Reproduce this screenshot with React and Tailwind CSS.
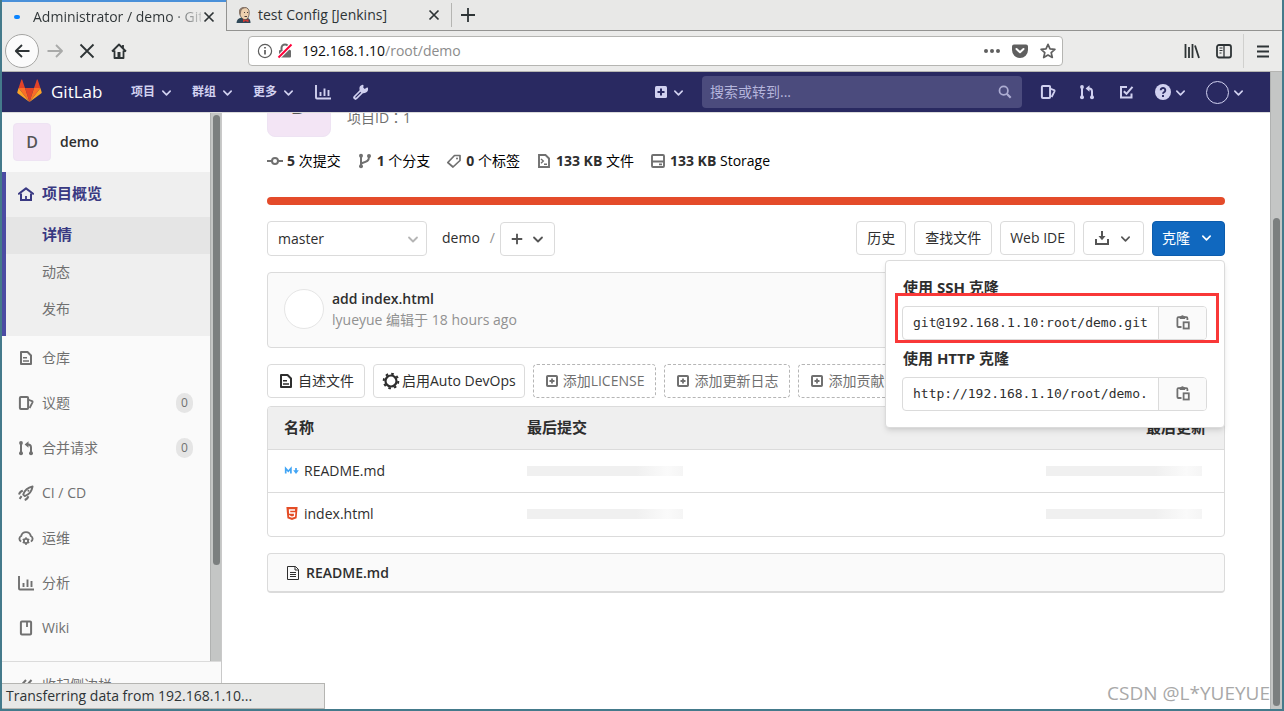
import { useState } from 'react'

const Icon = ({ className = 'size-4', children, viewBox = '0 0 16 16' }) => (
  <svg className={`shrink-0 ${className}`} viewBox={viewBox} fill="none" stroke="currentColor" strokeWidth="2" aria-hidden="true">
    {children}
  </svg>
)

const Chevron = ({ className = 'size-3' }) => (
  <Icon className={className} viewBox="0 0 12 12">
    <path d="M2 4.5l4 4 4-4" strokeWidth="1.8" strokeLinecap="round" strokeLinejoin="round" />
  </Icon>
)

const CloseIcon = () => (
  <Icon className="size-4">
    <path d="M3.5 3.5l9 9M12.5 3.5l-9 9" strokeWidth="1.7" />
  </Icon>
)

const ChartIcon = ({ className }) => (
  <Icon className={className}>
    <path d="M1 1v12.5a1 1 0 001 1h14" strokeWidth="1.9" />
    <path d="M5.5 8v4M9.5 4.5V12M13.5 6v6" strokeWidth="1.9" />
  </Icon>
)

const IssuesIcon = ({ className }) => (
  <Icon className={className}>
    <rect x="1.9" y="2" width="8.2" height="12" rx="1" />
    <path d="M10 4.5l4 1.6c.5.2.7.7.5 1.2L11.6 13" strokeWidth="1.8" />
  </Icon>
)

const MergeIcon = ({ className }) => (
  <Icon className={className}>
    <path d="M3 4v9M13 12V7.5a3 3 0 00-3-3H9" />
    <circle cx="3" cy="3" r="1.9" fill="currentColor" stroke="none" />
    <circle cx="3" cy="13.2" r="2" fill="currentColor" stroke="none" />
    <circle cx="13" cy="13.2" r="2" fill="currentColor" stroke="none" />
    <path d="M10.5 1.2v6.6L6.6 4.5z" fill="currentColor" stroke="none" />
  </Icon>
)

const HomeIcon = ({ className }) => (
  <Icon className={className}>
    <path d="M.9 7.8L8 2.4l7.1 5.4" strokeLinecap="round" strokeLinejoin="round" />
    <path d="M3 7.5V14h10V7.5" />
    <path d="M8 10v4" strokeWidth="1.8" />
  </Icon>
)

const DocIcon = ({ className }) => (
  <Icon className={className}>
    <path d="M3 2h6.5L13 5.5V14H3z" strokeLinejoin="round" />
    <path d="M5 7.8h4M5 10.9h6" strokeWidth="1.5" />
  </Icon>
)

const RocketIcon = ({ className }) => (
  <Icon className={className}>
    <path d="M5.2 9.5C6.5 5.5 9.5 2.6 14.6 1.5c-.8 5-3.8 8.2-7.8 9.6z" strokeWidth="1.8" strokeLinejoin="round" />
    <path d="M4.8 5.8C3 6.2 1.6 7.5 1 9.6M10.3 11.3c-.4 1.8-1.6 3-3.6 3.7M3.6 11.2l-2 2.6" strokeWidth="2" />
    <circle cx="10.4" cy="5.8" r="1" fill="currentColor" stroke="none" />
  </Icon>
)

const CloudGearIcon = ({ className }) => (
  <Icon className={className}>
    <path d="M3.2 11.5A3 3 0 013.2 6 4.9 4.9 0 0112.8 6a3 3 0 010 5.5" strokeWidth="1.9" />
    <circle cx="8" cy="11" r="2.1" strokeWidth="1.8" />
    <path d="M8 7.2v1.6M8 13.2V15M4.7 9.1l1.4.8M9.9 12.1l1.4.8M4.7 12.9l1.4-.8M9.9 9.9l1.4-.8" strokeWidth="1.5" />
  </Icon>
)

const BookIcon = ({ className }) => (
  <Icon className={className}>
    <rect x="2.9" y="1.5" width="10.2" height="13" rx="1" />
    <path d="M9 2v5" strokeWidth="1.8" />
  </Icon>
)

const PlusSquare = ({ className }) => (
  <Icon className={className} viewBox="0 0 14 14">
    <rect x="2" y="2" width="10" height="10" rx=".8" />
    <path d="M7 4.5v5M4.5 7h5" strokeWidth="1.8" />
  </Icon>
)

const CopyIcon = () => (
  <Icon className="size-4">
    <path d="M6.5 13H3.4a1 1 0 01-1-1V4.2a1 1 0 011-1h8a1 1 0 011 1V6" strokeWidth="1.8" />
    <path d="M4.7 2.3h1.3a1.5 1.5 0 012.9 0h1.3V5H4.7z" fill="currentColor" stroke="none" />
    <rect x="8.6" y="8.3" width="5.2" height="6.2" strokeWidth="1.8" />
  </Icon>
)

const GitLabLogo = () => (
  <svg className="h-6 w-[25px] shrink-0" viewBox="0 0 25 24" aria-hidden="true">
    <path fill="#e24329" d="M12.5 23l4.5-14h-9z" />
    <path fill="#fc6d26" d="M12.5 23L8 9H1.6zM12.5 23L17 9h6.4z" />
    <path fill="#fca326" d="M1.6 9L.3 13.2c-.1.4 0 .8.3 1L12.5 23zM23.4 9l1.3 4.2c.1.4 0 .8-.3 1L12.5 23z" />
    <path fill="#e24329" d="M1.6 9H8L5.2.8c-.1-.4-.7-.4-.9 0zM23.4 9H17L19.8.8c.1-.4.7-.4.9 0z" />
  </svg>
)

const JenkinsIcon = () => (
  <svg className="size-4 shrink-0" viewBox="0 0 16 16" aria-hidden="true">
    <path d="M.5 16c0-3 2-5 5-5.5l6 .5c2 .5 3 2 3 5z" fill="#2f4858" />
    <path d="M3.5 5C3.5 2 5.5.4 8.5.4s4.900 2 4.700 5.600c-.2 4-1.700 6.700-4.200 6.700S3.5 9 3.5 5z" fill="#edd0ae" stroke="#4b3f3a" strokeWidth=".7" />
    <path d="M3.2 6.500C2.500 2.500 4.500.3 8 .3c1.300 0 2.200.2 3 .7-3.200 0-5 .8-5.700 2.800L4.600 8z" fill="#8a7668" />
    <path d="M8 5.500h1M11 5.500h1M8.500 9.500h2.500" stroke="#3b3030" strokeWidth=".9" />
    <path d="M7 12l2.500 1.200L12.500 12v3.200L9.500 14 7 15.200z" fill="#d33833" />
  </svg>
)

const navLinks = ['项目', '群组', '更多']

const menu = [
  { label: '仓库', icon: DocIcon },
  { label: '议题', icon: IssuesIcon, count: 0 },
  { label: '合并请求', icon: MergeIcon, count: 0 },
  { label: 'CI / CD', icon: RocketIcon },
  { label: '运维', icon: CloudGearIcon },
  { label: '分析', icon: ChartIcon },
  { label: 'Wiki', icon: BookIcon },
]

const MarkdownFile = () => (
  <Icon className="size-4">
    <path d="M1.7 10.5v-5l2.6 2.8 2.6-2.8v5" stroke="#42a5f5" strokeWidth="1.7" />
    <path d="M12 5v4" stroke="#42a5f5" strokeWidth="1.7" />
    <path d="M9.2 7.3h5.6L12 11z" fill="#42a5f5" stroke="none" />
  </Icon>
)

const HtmlFile = () => (
  <Icon className="size-4">
    <path d="M2.4 1h11.2l-1 11.2L8 14l-4.6-1.8z" fill="#e44d26" stroke="none" />
    <path d="M11 4H5.5l.2 3h5l-.3 3.3L8 11l-2.3-.7-.1-1" stroke="#fff" strokeWidth="1.3" />
  </Icon>
)

const files = [
  { name: 'README.md', icon: MarkdownFile },
  { name: 'index.html', icon: HtmlFile },
]

function BrowserChrome() {
  return (
    <div className="shrink-0 bg-[#ebebea] text-[#2e3436] border-b border-[#b5b5b2]">
      <div className="flex h-[31px] text-sm">
        <div className="flex w-56 items-center border-t-2 border-[#4a90d9] pl-3 pr-[9px]">
          <span className="h-1 w-1.5 shrink-0 rounded-full bg-[#0a84ff]" />
          <span className="ml-[13px] flex-1 overflow-hidden whitespace-nowrap bg-linear-to-r from-[#2e3436] from-80% to-[#2e3436]/20 bg-clip-text text-transparent">
            Administrator / demo · GitLab
          </span>
          <button type="button" aria-label="Close tab"><CloseIcon /></button>
        </div>
        <div className="flex flex-1 items-center border-b border-l border-[#939391] bg-[#e8e8e7]">
          <div className="flex h-6 w-[225px] items-center border-r border-[#b5b5b2] px-[9px]">
            <JenkinsIcon />
            <span className="ml-1.5 flex-1 whitespace-nowrap">test Config [Jenkins]</span>
            <button type="button" aria-label="Close tab"><CloseIcon /></button>
          </div>
          <button type="button" aria-label="New tab" className="ml-2">
            <Icon><path d="M8 1v14M1 8h14" strokeWidth="1.8" /></Icon>
          </button>
        </div>
      </div>
      <div className="flex h-10 items-center pl-[3px] pr-3">
        <button type="button" aria-label="Back" className="flex size-[34px] items-center justify-center rounded-full border border-[#a5a5a3] bg-[#fbfbfb]">
          <Icon><path d="M15.5 8H1.5M8 2L1.8 8 8 14" strokeWidth="1.8" strokeLinejoin="round" /></Icon>
        </button>
        <button type="button" aria-label="Forward" className="ml-2 text-[#a9aaa9]">
          <Icon><path d="M.5 8h14M9 2l6 6-6 6" strokeWidth="1.8" strokeLinejoin="round" /></Icon>
        </button>
        <button type="button" aria-label="Stop" className="ml-4"><Icon><path d="M1.5 1.5l13 13M14.5 1.5l-13 13" strokeWidth="1.8" /></Icon></button>
        <button type="button" aria-label="Home" className="ml-4">
          <Icon>
            <path d="M1 8.5l7-7 7 7M3.5 7.5V15h9V7.5M12 2v3" strokeWidth="1.8" strokeLinejoin="round" />
            <path d="M8 9v5" strokeWidth="3" />
          </Icon>
        </button>
        <div className="ml-[121px] mr-[121px] flex h-[30px] flex-1 items-center rounded border border-[#b5b5b2] bg-white pl-2 pr-1.5 text-sm">
          <Icon className="size-4 text-[#5c5c5c]">
            <circle cx="8" cy="8" r="6.6" strokeWidth="1.2" />
            <path d="M8 7v4.5M8 4v1.5" strokeWidth="1.7" />
          </Icon>
          <Icon className="ml-1 size-4 text-[#6b6b6b]">
            <rect x="2" y="7" width="12" height="7.5" rx="1" fill="currentColor" stroke="none" />
            <path d="M4.5 8V5a3.5 3.5 0 017 0v3" />
            <path d="M1.5 14.5l13-13" stroke="#fff" strokeWidth="4" />
            <path d="M1.5 14.5l13-13" stroke="#ff0039" />
          </Icon>
          <span className="ml-[9px] flex-1 text-[#0c0c0d]">192.168.1.10<span className="text-[#8c8c8c]">/root/demo</span></span>
          <div className="flex items-center gap-3 text-[#5f5f5f]">
            <Icon><g fill="currentColor" stroke="none"><circle cx="2" cy="8" r="2" /><circle cx="8" cy="8" r="2" /><circle cx="14" cy="8" r="2" /></g></Icon>
            <Icon>
              <path d="M2 1.5h12A2 2 0 0116 3.500V7a8 8 0 01-16 0V3.500a2 2 0 012-2z" fill="currentColor" stroke="none" />
              <path d="M4.5 6L8 9.3 11.5 6" stroke="#fff" strokeLinecap="round" strokeLinejoin="round" />
            </Icon>
            <Icon><path d="M8 1.3l2 4.5 4.9.5-3.7 3.3 1.1 4.9L8 12l-4.300 2.500 1.100-4.900L1.100 6.300 6 5.800z" strokeWidth="1.7" strokeLinejoin="round" /></Icon>
          </div>
        </div>
        <Icon className="size-4"><path d="M1.5 1v14M5 4v11M8.5 1v14M11 2.5L15 15" strokeWidth="1.8" /></Icon>
        <Icon className="ml-4 size-4">
          <rect x="1" y="2" width="14" height="12.5" rx="2" strokeWidth="1.8" />
          <path d="M8 2v12" strokeWidth="1.3" />
          <path d="M3.5 5h3M3.5 7.5h3M3.5 10h2" strokeWidth="1" />
        </Icon>
        <div className="ml-[11px] h-[34px] w-px bg-[#d0d0ce]" />
        <button type="button" aria-label="Menu" className="ml-3">
          <Icon className="size-3.5" viewBox="0 0 14 14"><path d="M1 2.5h12M1 7.5h12M1 12.5h12" strokeWidth="1.8" /></Icon>
        </button>
      </div>
    </div>
  )
}

function NavBar() {
  return (
    <header className="flex h-10 shrink-0 items-center bg-[#292961] pl-[15px] pr-[26px] text-[#d1d1f0]">
      <a href="#home" className="flex w-[87px] items-center gap-[9px] pb-0.5">
        <GitLabLogo />
        <span className="text-[17px] font-medium leading-none text-white">GitLab</span>
      </a>
      <nav className="ml-[27px] flex items-center gap-5">
        {navLinks.map((label) => (
          <button key={label} type="button" className="flex items-center gap-1.5 text-xs font-bold">
            {label}
            <Chevron className="size-[11px]" />
          </button>
        ))}
        <a href="#analytics" aria-label="分析"><ChartIcon className="ml-px size-4" /></a>
        <a href="#admin" aria-label="管理">
          <Icon className="ml-0.5 size-4">
            <path d="M2.5 13.5L8.5 7.5" strokeWidth="4.500" strokeLinecap="round" />
            <path d="M2.8 13.2L8 8" stroke="#292961" strokeWidth="1.2" strokeLinecap="round" />
            <path d="M14.3 4.2A3.6 3.6 0 119.8 1.4l-.2 2.6 2 1.8z" fill="currentColor" strokeWidth="1.4" strokeLinejoin="round" />
          </Icon>
        </a>
      </nav>
      <div className="flex-1" />
      <button type="button" aria-label="新建" className="flex items-center gap-1.5">
        <svg className="size-3" viewBox="0 0 12 12" aria-hidden="true">
          <rect width="12" height="12" rx="1.5" fill="#d1d1f0" />
          <path d="M6 2.5v7M2.5 6h7" stroke="#292961" strokeWidth="2" />
        </svg>
        <Chevron className="size-[11px]" />
      </button>
      <div className="ml-[18px] flex h-8 w-80 items-center rounded bg-[#4b4b7d] px-2">
        <input aria-label="搜索" placeholder="搜索或转到..." className="min-w-0 flex-1 bg-transparent text-sm outline-none placeholder:text-[#b5b5dc]" />
        <Icon className="mr-0.5 size-3.5 text-[#adadd2]"><circle cx="6.5" cy="6.5" r="4.8" /><path d="M10 10l4.5 4.5" strokeWidth="2.5" /></Icon>
      </div>
      <div className="ml-[18px] flex items-center">
        <IssuesIcon className="size-4" />
        <MergeIcon className="ml-[23px] size-4" />
        <Icon className="ml-[23px] size-4">
          <path d="M9 3H3v10.500h10.500V9.500" />
          <path d="M5.8 7.2l2.7 2.6 6-7" />
        </Icon>
        <button type="button" aria-label="帮助" className="ml-[21px] flex items-center gap-1">
          <svg className="size-4" viewBox="0 0 16 16" aria-hidden="true">
            <circle cx="8" cy="8" r="8" fill="#d1d1f0" />
            <path d="M5.7 6.2a2.3 2.2 0 114 1.5C8.9 8.3 8 8.6 8 9.8M8 11v2" fill="none" stroke="#292961" strokeWidth="1.9" />
          </svg>
          <Chevron className="size-[11px]" />
        </button>
        <button type="button" aria-label="用户" className="ml-5 flex items-center gap-1">
          <span className="size-[23px] rounded-full border border-[#d1d1f0]" />
          <Chevron className="size-[11px]" />
        </button>
      </div>
    </header>
  )
}

function Sidebar() {
  return (
    <aside className="flex w-[220px] shrink-0 flex-col border-r border-[#c9c9c9] bg-[#fafafa] text-sm text-[#707070]">
      <div className="flex min-h-0 flex-1">
        <div className="min-w-0 flex-1 overflow-hidden">
          <a href="#demo" className="flex h-[59px] items-center gap-[9px] pb-0.5 pl-[11px] font-semibold text-[#2e2e2e]">
            <span className="flex size-[38px] items-center justify-center rounded border border-[#eee3f3] bg-[#f3e5f5] text-base text-[#555]">D</span>
            demo
          </a>
          <div className="border-l-4 border-[#4b4ba3] bg-[#efefef] pb-2">
            <a href="#overview" className="flex h-[45px] items-center gap-2 pb-0.5 pl-3 text-[15px] font-bold text-[#393982]">
              <HomeIcon className="size-4" />
              项目概览
            </a>
            <a href="#details" className="flex h-[37px] items-center bg-[#e5e5e5] pb-0.5 pl-9 text-[15px] font-bold text-[#393982]">详情</a>
            <a href="#activity" className="flex h-[37px] items-center pb-0.5 pl-9">动态</a>
            <a href="#releases" className="flex h-[37px] items-center pb-0.5 pl-9">发布</a>
          </div>
          {menu.map(({ label, icon: ItemIcon, count }) => (
            <a key={label} href="#menu" className="flex h-[45px] items-center gap-2 pb-0.5 pl-4 pr-[17px]">
              <ItemIcon className="size-4" />
              <span className="flex-1">{label}</span>
              {count !== undefined && (
                <span className="flex h-5 w-[17px] items-center justify-center rounded-full bg-[#e5e5e5] text-xs">{count}</span>
              )}
            </a>
          ))}
        </div>
        <div className="w-[11px] border-l border-[#b0b2b1] bg-[#c4c6c5] px-0.5 pt-0.5">
          <div className="h-[450px] w-[7px] rounded-full bg-[#7b7f7f]" />
        </div>
      </div>
      <button type="button" className="flex h-12 shrink-0 items-center gap-2 border-t border-[#dbdbdb] pb-0.5 pl-4">
        <Icon><path d="M8 3L3.5 8 8 13M13.5 3L9 8l4.5 5" /></Icon>
        收起侧边栏
      </button>
    </aside>
  )
}

const buttonBase = 'flex h-[34px] items-center rounded border border-[#dbdbdb] bg-white whitespace-nowrap'

function CloneField({ id, label, url }) {
  return (
    <div>
      <label htmlFor={id} className="block h-[27px] pl-px text-[15px] font-bold leading-4">{label}</label>
      <div className="flex h-[34px] overflow-hidden rounded border border-[#dbdbdb]">
        <input id={id} readOnly defaultValue={url} className="min-w-0 flex-1 px-2.5 font-['DejaVu_Sans_Mono',monospace] text-[13px] outline-none" />
        <button type="button" aria-label="复制" className="flex w-12 items-center justify-center border-l border-[#dbdbdb] bg-[#fafafa] pb-0.5 text-[#707070]">
          <CopyIcon />
        </button>
      </div>
    </div>
  )
}

function CloneDropdown() {
  const [open, setOpen] = useState(true)

  return (
    <div className="relative">
      <button
        type="button"
        onClick={() => setOpen(!open)}
        className="flex h-[35px] w-[73px] items-center justify-between rounded border border-[#0b5cad] bg-[#1068bf] pb-0.5 pl-[9px] pr-3 text-white"
      >
        克隆
        <Chevron className="size-[11px]" />
      </button>
      {open && (
        <div className="absolute right-0 top-[39px] z-10 flex w-[340px] flex-col gap-2.5 rounded border border-[#dbdbdb] bg-white pb-4 pl-4 pr-[17px] pt-[18px] shadow-md">
          <CloneField id="clone-ssh" label="使用 SSH 克隆" url="git@192.168.1.10:root/demo.git" />
          <CloneField id="clone-http" label="使用 HTTP 克隆" url="http://192.168.1.10/root/demo.git" />
          <div className="absolute left-[9px] right-[5px] top-8 h-[50px] border-3 border-[#f93838] pointer-events-none" />
        </div>
      )}
    </div>
  )
}

function AddFile({ children }) {
  return (
    <button type="button" className="flex h-[34px] items-center gap-1 whitespace-nowrap rounded border border-dashed border-[#b5b5b5] px-[11px] text-[#707070]">
      <PlusSquare className="size-3.5" />
      {children}
    </button>
  )
}

const Skeleton = () => (
  <div className="h-2.5 w-[156px] bg-linear-to-r from-[#f0f0f0] from-70% via-[#fafafa] via-90% to-[#f5f5f5]" />
)

function ProjectPage() {
  return (
    <main className="min-w-0 flex-1 overflow-hidden bg-white text-sm text-[#2e2e2e]">
      <div className="mx-auto -mt-10 max-w-[990px] px-4">
        <div className="flex gap-4">
          <div className="flex size-16 items-center justify-center rounded-lg border border-[#eee3f3] bg-[#f3e5f5] text-2xl text-[#555]">D</div>
          <div className="pt-[34px] text-[#707070]">项目ID<span className="font-['Noto_Sans_CJK_TC',sans-serif]">：</span>1</div>
        </div>

        <div className="mt-3.5 flex h-5 items-center gap-4 text-black">
          <span className="flex items-center gap-1">
            <Icon className="size-4 text-[#707070]"><circle cx="8" cy="8" r="3" /><path d="M0 8h5M11 8h5" /></Icon>
            <span><b className="font-bold text-[#2e2e2e]">5</b> 次提交</span>
          </span>
          <span className="flex items-center gap-1">
            <Icon className="size-4 text-[#707070]">
              <path d="M4 3v10M12 4c0 4-2 4.5-8 6.5" />
              <g fill="currentColor" stroke="none"><circle cx="4" cy="2.8" r="2" /><circle cx="4" cy="13.2" r="2" /><circle cx="12" cy="3" r="2" /></g>
            </Icon>
            <span><b className="font-bold text-[#2e2e2e]">1</b> 个分支</span>
          </span>
          <span className="flex items-center gap-1">
            <Icon className="size-4 text-[#707070]">
              <path d="M8.5 2.5H14v5L7 14 1.8 9.5z" strokeWidth="1.7" strokeLinejoin="round" />
              <circle cx="11" cy="5.5" r="1" fill="currentColor" stroke="none" />
            </Icon>
            <span><b className="font-bold text-[#2e2e2e]">0</b> 个标签</span>
          </span>
          <span className="flex items-center gap-1">
            <Icon className="size-4 text-[#707070]">
              <path d="M3 2h6.5L13 5.5V14H3z" strokeWidth="1.9" />
              <path d="M5 6l2.3 2L5 10.2M8 11.3h3" strokeWidth="1.4" />
            </Icon>
            <span><b className="font-bold text-[#2e2e2e]">133 KB</b> 文件</span>
          </span>
          <span className="flex items-center gap-1">
            <Icon className="size-4 text-[#707070]"><rect x="2" y="2" width="12" height="12" rx="1" strokeWidth="1.9" /><path d="M2 8.5h12M9 11.3h3" strokeWidth="1.8" /></Icon>
            <span><b className="font-bold text-[#2e2e2e]">133 KB</b> Storage</span>
          </span>
        </div>

        <div className="mt-[26px] h-2 rounded-full bg-[#e44b2a]" />

        <div className="mt-4 flex items-start">
          <div className="relative">
            <select aria-label="分支" className="h-[35px] w-40 appearance-none rounded border border-[#dbdbdb] bg-white px-2.5 outline-none">
              <option>master</option>
            </select>
            <span className="pointer-events-none absolute inset-y-0 right-2 flex items-center text-[#b5b5b5]"><Chevron /></span>
          </div>
          <a href="#demo" className="ml-[15px] leading-[34px]">demo</a>
          <span className="ml-2.5 leading-[34px] text-[#919191]">/</span>
          <button type="button" aria-label="添加" className="ml-[5px] mt-px flex h-[34px] w-[55px] items-center justify-between rounded border border-[#dbdbdb] px-2.5 text-[#555]">
            <Icon className="size-3"><path d="M8 1v14M1 8h14" strokeWidth="2.5" /></Icon>
            <Chevron />
          </button>
          <div className="flex-1" />
          <div className="flex gap-2">
            <button type="button" className={`${buttonBase} px-2.5`}>历史</button>
            <button type="button" className={`${buttonBase} px-2.5`}>查找文件</button>
            <button type="button" className={`${buttonBase} px-[9px]`}>Web IDE</button>
            <button type="button" aria-label="下载" className={`${buttonBase} w-[61px] justify-between px-2.5 text-[#555]`}>
              <Icon><path d="M2 9v5h12V9" /><path d="M8 1v6" /><path d="M4.5 6h7L8 10.3z" fill="currentColor" stroke="none" /></Icon>
              <Chevron className="mr-0.5 size-[11px]" />
            </button>
            <CloneDropdown />
          </div>
        </div>

        <div className="mt-4 flex h-[76px] items-center gap-2 rounded border border-[#dbdbdb] bg-[#fafafa] px-4 pb-0.5">
          <span className="size-10 rounded-full border border-[#e5e5e5] bg-white" />
          <div className="leading-[21px]">
            <a href="#commit" className="block font-semibold">add index.html</a>
            <div className="text-[#919191]">lyueyue 编辑于 18 hours ago</div>
          </div>
        </div>

        <div className="mt-4 flex gap-2 overflow-hidden">
          <button type="button" className={`${buttonBase} gap-1 px-2.5`}><DocIcon className="size-4" />自述文件</button>
          <button type="button" className={`${buttonBase} gap-0.5 px-2`}>
            <Icon className="size-[18px]" viewBox="0 0 18 18">
              <circle cx="9" cy="9" r="5.5" strokeWidth="2.2" />
              <circle cx="9" cy="9" r="7.3" strokeWidth="2" strokeDasharray="2.6 3.13" />
            </Icon>
            启用Auto DevOps
          </button>
          <AddFile>添加LICENSE</AddFile>
          <AddFile>添加更新日志</AddFile>
          <AddFile>添加贡献信息</AddFile>
        </div>

        <div className="mt-2 overflow-hidden rounded border border-[#dbdbdb]">
          <table className="w-full table-fixed text-left">
            <thead>
              <tr className="h-[42px] border-b border-[#dbdbdb] bg-[#efefef] text-[15px] font-bold">
                <th className="w-[243px] px-4">名称</th>
                <th className="px-4">最后提交</th>
                <th className="w-60 pr-[18px] text-right">最后更新</th>
              </tr>
            </thead>
            <tbody>
              {files.map(({ name, icon: FileIcon }) => (
                <tr key={name} className="h-[43px] border-b border-[#dbdbdb] last:h-11 last:border-b-0">
                  <td className="px-4">
                    <a href="#file" className="flex items-center gap-1"><FileIcon />{name}</a>
                  </td>
                  <td className="px-4"><Skeleton /></td>
                  <td className="pr-[18px]"><div className="ml-auto w-40"><Skeleton /></div></td>
                </tr>
              ))}
            </tbody>
          </table>
        </div>

        <div className="mt-4 flex h-10 items-center gap-[5px] rounded border border-b-2 border-[#dbdbdb] bg-[#fafafa] pl-[17px] font-semibold">
          <Icon><path d="M2.5 1.5h8l3 3v10h-11zM10 1.5V5h3.5M5 7.5h6M5 9.5h6M5 11.5h6" strokeWidth="1" /></Icon>
          README.md
        </div>
      </div>
    </main>
  )
}

export default function App() {
  return (
    <div className="relative flex h-screen flex-col overflow-hidden bg-[#447a8b] px-0.5 pb-0.5 font-['Open_Sans','Noto_Sans_CJK_SC',sans-serif]">
      <BrowserChrome />
      <div className="flex min-h-0 flex-1">
        <div className="flex min-w-0 flex-1 flex-col">
          <NavBar />
          <div className="flex min-h-0 flex-1 border-t border-[#dbdbdb]">
            <Sidebar />
            <ProjectPage />
          </div>
        </div>
        <div className="flex w-3 flex-col justify-end border-l border-[#b0b2b1] bg-[#c4c6c5] px-0.5 pb-[3px]">
          <div className="h-[77%] w-[7px] rounded-full bg-[#7b7f7f]" />
        </div>
      </div>
      <div className="absolute bottom-0.5 left-0.5 flex h-[26px] w-[323px] items-center border border-l-0 border-[#b5b5b2] bg-[#e8e8e7] pl-1 text-sm text-[#2e3436]">
        Transferring data from 192.168.1.10...
      </div>
      <div className="absolute bottom-1 right-3.5 text-[19px] text-[#a8a8a8]">CSDN @L*YUEYUE</div>
    </div>
  )
}
